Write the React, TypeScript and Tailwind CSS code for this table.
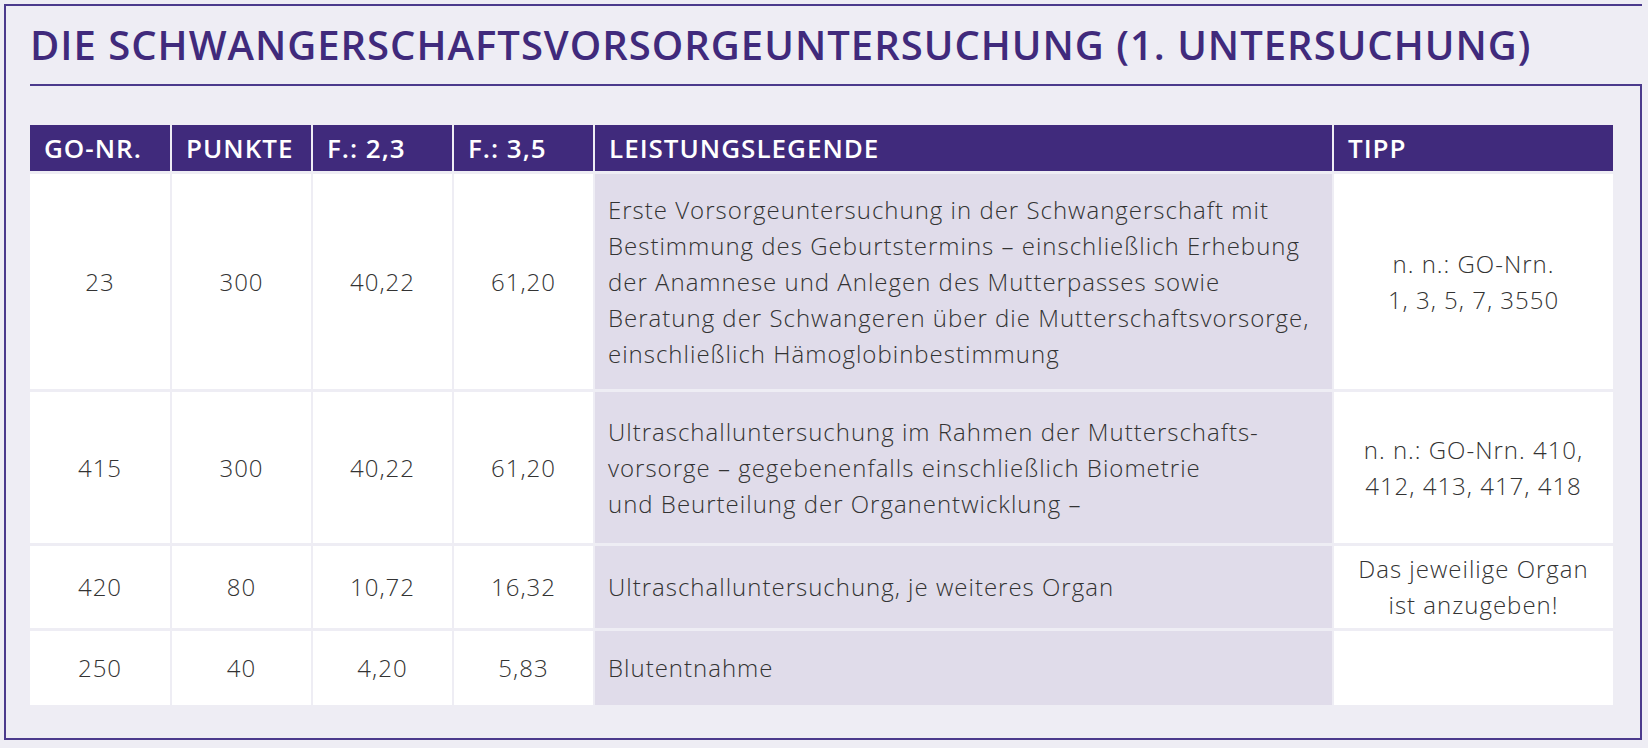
import React from "react";

type Row = {
  nr: string;
  punkte: string;
  f23: string;
  f35: string;
  legende: string[];
  tipp: string[];
  height: string;
};

const rows: Row[] = [
  {
    nr: "23",
    punkte: "300",
    f23: "40,22",
    f35: "61,20",
    legende: [
      "Erste Vorsorgeuntersuchung in der Schwangerschaft mit",
      "Bestimmung des Geburtstermins – einschließlich Erhebung",
      "der Anamnese und Anlegen des Mutterpasses sowie",
      "Beratung der Schwangeren über die Mutterschaftsvorsorge,",
      "einschließlich Hämoglobinbestimmung",
    ],
    tipp: ["n. n.: GO-Nrn.", "1, 3, 5, 7, 3550"],
    height: "h-[215px]",
  },
  {
    nr: "415",
    punkte: "300",
    f23: "40,22",
    f35: "61,20",
    legende: [
      "Ultraschalluntersuchung im Rahmen der Mutterschafts-",
      "vorsorge – gegebenenfalls einschließlich Biometrie",
      "und Beurteilung der Organentwicklung –",
    ],
    tipp: ["n. n.: GO-Nrn. 410,", "412, 413, 417, 418"],
    height: "h-[151px]",
  },
  {
    nr: "420",
    punkte: "80",
    f23: "10,72",
    f35: "16,32",
    legende: ["Ultraschalluntersuchung, je weiteres Organ"],
    tipp: ["Das jeweilige Organ", "ist anzugeben!"],
    height: "h-[82px]",
  },
  {
    nr: "250",
    punkte: "40",
    f23: "4,20",
    f35: "5,83",
    legende: ["Blutentnahme"],
    tipp: [],
    height: "h-[74px]",
  },
];

const headers = ["GO-NR.", "PUNKTE", "F.: 2,3", "F.: 3,5", "LEISTUNGSLEGENDE", "TIPP"];

function NumCell({ value, height }: { value: string; height: string }) {
  return (
    <div className={`flex items-center justify-center bg-white ${height}`}>
      {value}
    </div>
  );
}

export default function App() {
  return (
    <div
      className="h-[748px] w-[1648px] overflow-hidden bg-[#eeedf4] pl-[4px] pt-[4px]"
      style={{ fontFamily: '"Open Sans", "Noto Sans", sans-serif' }}
    >
      <div className="flex h-[736px] w-[1638px] flex-col border-b-2 border-l-2 border-t-2 border-[#4b3a8c]">
        <div className="ml-[24px] h-[80px] shrink-0 border-b-2 border-[#4b3a8c]">
          <h1 className="pt-[14px] text-[40px] font-semibold leading-[50px] tracking-[1px] text-[#402a7c]">
            DIE SCHWANGERSCHAFTSVORSORGEUNTERSUCHUNG (1. UNTERSUCHUNG)
          </h1>
        </div>
        <div className="flex-1 border-r-2 border-[#4b3a8c] pl-[24px] pt-[39px]">
          <div className="grid grid-cols-[140px_139px_139px_139px_737px_279px] gap-x-[2px] gap-y-[3px] text-[24px] font-light leading-[36px] tracking-[1px] text-[#333333]">
            {headers.map((h) => (
              <div
                key={h}
                className="flex h-[46px] items-center bg-[#402a7c] pl-[14px] text-[26px] font-semibold tracking-[1px] text-white"
              >
                {h}
              </div>
            ))}
            {rows.map((r) => (
              <React.Fragment key={r.nr}>
                <NumCell value={r.nr} height={r.height} />
                <NumCell value={r.punkte} height={r.height} />
                <NumCell value={r.f23} height={r.height} />
                <NumCell value={r.f35} height={r.height} />
                <div className={`flex flex-col justify-center bg-[#e0dcea] pl-[13px] ${r.height}`}>
                  {r.legende.map((line) => (
                    <span key={line} className="whitespace-nowrap">
                      {line}
                    </span>
                  ))}
                </div>
                <div className={`flex flex-col items-center justify-center bg-white text-center ${r.height}`}>
                  {r.tipp.map((line) => (
                    <span key={line} className="whitespace-nowrap">
                      {line}
                    </span>
                  ))}
                </div>
              </React.Fragment>
            ))}
          </div>
        </div>
      </div>
    </div>
  );
}
